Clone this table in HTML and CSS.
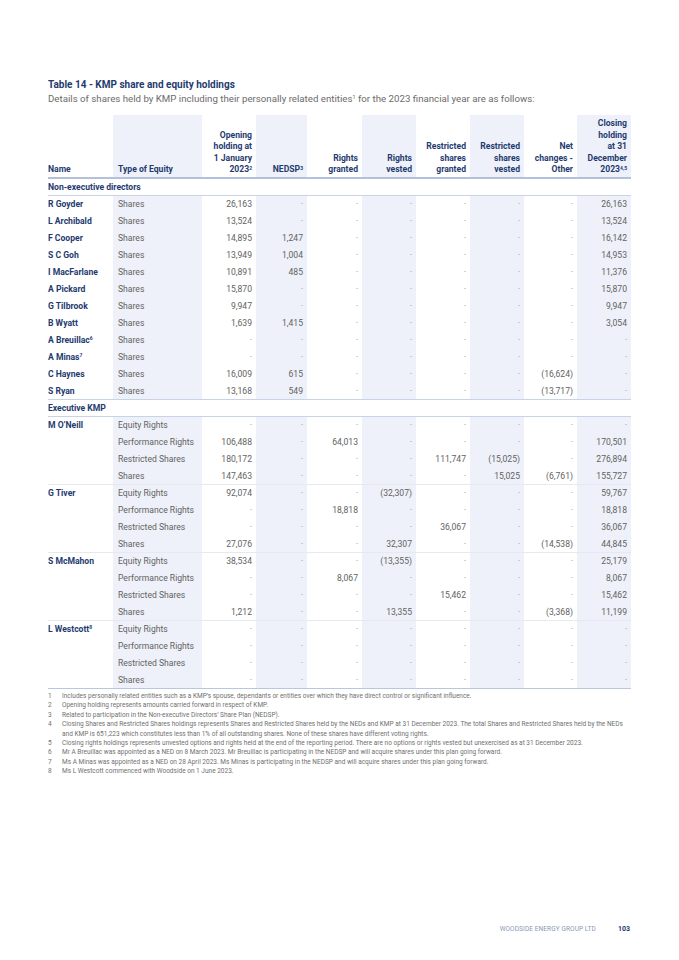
FILE: index.html
```html
<!DOCTYPE html>
<html lang="en">
<head>
<meta charset="utf-8">
<title>Table 14 - KMP share and equity holdings</title>
<link rel="stylesheet" href="styles.css">
</head>
<body>
<div class="page">
  <h1 class="title">Table 14 - KMP share and equity holdings</h1>
  <p class="intro">Details of shares held by KMP including their personally related entities<sup>1</sup> for the 2023 financial year are as follows:</p>

  <table class="kmp">
    <colgroup>
      <col class="c-name">
      <col class="c-type shade">
      <col class="c-num">
      <col class="c-num2 shade">
      <col class="c-num3">
      <col class="c-num shade">
      <col class="c-num">
      <col class="c-num shade">
      <col class="c-num4">
      <col class="c-num shade">
    </colgroup>
    <thead>
      <tr>
        <th class="l">Name</th>
        <th class="l">Type of Equity</th>
        <th>Opening<br>holding at<br>1 January<br>2023<sup>2</sup></th>
        <th>NEDSP<sup>3</sup></th>
        <th>Rights<br>granted</th>
        <th>Rights<br>vested</th>
        <th>Restricted<br>shares<br>granted</th>
        <th>Restricted<br>shares<br>vested</th>
        <th>Net<br>changes -<br>Other</th>
        <th>Closing<br>holding<br>at 31<br>December<br>2023<sup>4,5</sup></th>
      </tr>
    </thead>
    <tbody>
      <tr class="section first"><td colspan="10">Non-executive directors</td></tr>
      <tr><td class="nm">R Goyder</td><td class="ty">Shares</td><td>26,163</td><td class="d">-</td><td class="d">-</td><td class="d">-</td><td class="d">-</td><td class="d">-</td><td class="d">-</td><td>26,163</td></tr>
      <tr><td class="nm">L Archibald</td><td class="ty">Shares</td><td>13,524</td><td class="d">-</td><td class="d">-</td><td class="d">-</td><td class="d">-</td><td class="d">-</td><td class="d">-</td><td>13,524</td></tr>
      <tr><td class="nm">F Cooper</td><td class="ty">Shares</td><td>14,895</td><td>1,247</td><td class="d">-</td><td class="d">-</td><td class="d">-</td><td class="d">-</td><td class="d">-</td><td>16,142</td></tr>
      <tr><td class="nm">S C Goh</td><td class="ty">Shares</td><td>13,949</td><td>1,004</td><td class="d">-</td><td class="d">-</td><td class="d">-</td><td class="d">-</td><td class="d">-</td><td>14,953</td></tr>
      <tr><td class="nm">I MacFarlane</td><td class="ty">Shares</td><td>10,891</td><td>485</td><td class="d">-</td><td class="d">-</td><td class="d">-</td><td class="d">-</td><td class="d">-</td><td>11,376</td></tr>
      <tr><td class="nm">A Pickard</td><td class="ty">Shares</td><td>15,870</td><td class="d">-</td><td class="d">-</td><td class="d">-</td><td class="d">-</td><td class="d">-</td><td class="d">-</td><td>15,870</td></tr>
      <tr><td class="nm">G Tilbrook</td><td class="ty">Shares</td><td>9,947</td><td class="d">-</td><td class="d">-</td><td class="d">-</td><td class="d">-</td><td class="d">-</td><td class="d">-</td><td>9,947</td></tr>
      <tr><td class="nm">B Wyatt</td><td class="ty">Shares</td><td>1,639</td><td>1,415</td><td class="d">-</td><td class="d">-</td><td class="d">-</td><td class="d">-</td><td class="d">-</td><td>3,054</td></tr>
      <tr><td class="nm">A Breuillac<sup>6</sup></td><td class="ty">Shares</td><td class="d">-</td><td class="d">-</td><td class="d">-</td><td class="d">-</td><td class="d">-</td><td class="d">-</td><td class="d">-</td><td class="d">-</td></tr>
      <tr><td class="nm">A Minas<sup>7</sup></td><td class="ty">Shares</td><td class="d">-</td><td class="d">-</td><td class="d">-</td><td class="d">-</td><td class="d">-</td><td class="d">-</td><td class="d">-</td><td class="d">-</td></tr>
      <tr><td class="nm">C Haynes</td><td class="ty">Shares</td><td>16,009</td><td>615</td><td class="d">-</td><td class="d">-</td><td class="d">-</td><td class="d">-</td><td>(16,624)</td><td class="d">-</td></tr>
      <tr><td class="nm">S Ryan</td><td class="ty">Shares</td><td>13,168</td><td>549</td><td class="d">-</td><td class="d">-</td><td class="d">-</td><td class="d">-</td><td>(13,717)</td><td class="d">-</td></tr>

      <tr class="section second"><td colspan="10">Executive KMP</td></tr>
      <tr><td class="nm">M O’Neill</td><td class="ty">Equity Rights</td><td class="d">-</td><td class="d">-</td><td class="d">-</td><td class="d">-</td><td class="d">-</td><td class="d">-</td><td class="d">-</td><td class="d">-</td></tr>
      <tr><td></td><td class="ty">Performance Rights</td><td>106,488</td><td class="d">-</td><td>64,013</td><td class="d">-</td><td class="d">-</td><td class="d">-</td><td class="d">-</td><td>170,501</td></tr>
      <tr><td></td><td class="ty">Restricted Shares</td><td>180,172</td><td class="d">-</td><td class="d">-</td><td class="d">-</td><td>111,747</td><td>(15,025)</td><td class="d">-</td><td>276,894</td></tr>
      <tr class="grp-end"><td></td><td class="ty">Shares</td><td>147,463</td><td class="d">-</td><td class="d">-</td><td class="d">-</td><td class="d">-</td><td>15,025</td><td>(6,761)</td><td>155,727</td></tr>

      <tr><td class="nm">G Tiver</td><td class="ty">Equity Rights</td><td>92,074</td><td class="d">-</td><td class="d">-</td><td>(32,307)</td><td class="d">-</td><td class="d">-</td><td class="d">-</td><td>59,767</td></tr>
      <tr><td></td><td class="ty">Performance Rights</td><td class="d">-</td><td class="d">-</td><td>18,818</td><td class="d">-</td><td class="d">-</td><td class="d">-</td><td class="d">-</td><td>18,818</td></tr>
      <tr><td></td><td class="ty">Restricted Shares</td><td class="d">-</td><td class="d">-</td><td class="d">-</td><td class="d">-</td><td>36,067</td><td class="d">-</td><td class="d">-</td><td>36,067</td></tr>
      <tr class="grp-end"><td></td><td class="ty">Shares</td><td>27,076</td><td class="d">-</td><td class="d">-</td><td>32,307</td><td class="d">-</td><td class="d">-</td><td>(14,538)</td><td>44,845</td></tr>

      <tr><td class="nm">S McMahon</td><td class="ty">Equity Rights</td><td>38,534</td><td class="d">-</td><td class="d">-</td><td>(13,355)</td><td class="d">-</td><td class="d">-</td><td class="d">-</td><td>25,179</td></tr>
      <tr><td></td><td class="ty">Performance Rights</td><td class="d">-</td><td class="d">-</td><td>8,067</td><td class="d">-</td><td class="d">-</td><td class="d">-</td><td class="d">-</td><td>8,067</td></tr>
      <tr><td></td><td class="ty">Restricted Shares</td><td class="d">-</td><td class="d">-</td><td class="d">-</td><td class="d">-</td><td>15,462</td><td class="d">-</td><td class="d">-</td><td>15,462</td></tr>
      <tr class="grp-end"><td></td><td class="ty">Shares</td><td>1,212</td><td class="d">-</td><td class="d">-</td><td>13,355</td><td class="d">-</td><td class="d">-</td><td>(3,368)</td><td>11,199</td></tr>

      <tr><td class="nm">L Westcott<sup>8</sup></td><td class="ty">Equity Rights</td><td class="d">-</td><td class="d">-</td><td class="d">-</td><td class="d">-</td><td class="d">-</td><td class="d">-</td><td class="d">-</td><td class="d">-</td></tr>
      <tr><td></td><td class="ty">Performance Rights</td><td class="d">-</td><td class="d">-</td><td class="d">-</td><td class="d">-</td><td class="d">-</td><td class="d">-</td><td class="d">-</td><td class="d">-</td></tr>
      <tr><td></td><td class="ty">Restricted Shares</td><td class="d">-</td><td class="d">-</td><td class="d">-</td><td class="d">-</td><td class="d">-</td><td class="d">-</td><td class="d">-</td><td class="d">-</td></tr>
      <tr class="last"><td></td><td class="ty">Shares</td><td class="d">-</td><td class="d">-</td><td class="d">-</td><td class="d">-</td><td class="d">-</td><td class="d">-</td><td class="d">-</td><td class="d">-</td></tr>
    </tbody>
  </table>

  <ol class="notes">
    <li><span class="n">1</span><span>Includes personally related entities such as a KMP’s spouse, dependants or entities over which they have direct control or significant influence.</span></li>
    <li><span class="n">2</span><span>Opening holding represents amounts carried forward in respect of KMP.</span></li>
    <li><span class="n">3</span><span>Related to participation in the Non-executive Directors’ Share Plan (NEDSP).</span></li>
    <li><span class="n">4</span><span>Closing Shares and Restricted Shares holdings represents Shares and Restricted Shares held by the NEDs and KMP at 31 December 2023. The total Shares and Restricted Shares held by the NEDs and KMP is 651,223 which constitutes less than 1% of all outstanding shares. None of these shares have different voting rights.</span></li>
    <li><span class="n">5</span><span>Closing rights holdings represents unvested options and rights held at the end of the reporting period. There are no options or rights vested but unexercised as at 31 December 2023.</span></li>
    <li><span class="n">6</span><span>Mr A Breuillac was appointed as a NED on 8 March 2023. Mr Breuillac is participating in the NEDSP and will acquire shares under this plan going forward.</span></li>
    <li><span class="n">7</span><span>Ms A Minas was appointed as a NED on 28 April 2023. Ms Minas is participating in the NEDSP and will acquire shares under this plan going forward.</span></li>
    <li><span class="n">8</span><span>Ms L Westcott commenced with Woodside on 1 June 2023.</span></li>
  </ol>

  <footer class="footer">
    <span class="company">WOODSIDE ENERGY GROUP LTD</span>
    <span class="pageno">103</span>
  </footer>
</div>
</body>
</html>
```

FILE: styles.css
```css
* { box-sizing: border-box; }
html, body { margin: 0; padding: 0; background: #ffffff; }
body {
  font-family: Roboto, "Open Sans", "Liberation Sans", sans-serif;
  color: #626262;
}
.page {
  width: 679px;
  height: 960px;
  padding: 78px 48px 0 48px;
  position: relative;
}
.title {
  margin: 0;
  font-size: 10px;
  line-height: 13px;
  font-weight: 700;
  color: #1f3b6f;
}
.intro {
  margin: 1px 0 0 0;
  font-size: 9.7px;
  line-height: 13px;
  color: #6b6b6b;
}
.intro sup { font-size: 5.5px; vertical-align: top; line-height: 10px; }

.kmp {
  margin-top: 10px;
  width: 583px;
  border-collapse: collapse;
  table-layout: fixed;
  font-size: 8.6px;
}
.c-name { width: 65px; }
.c-type { width: 89px; }
.c-num { width: 54px; }
.c-num2 { width: 51px; }
.c-num3 { width: 55px; }
.c-num4 { width: 53px; }
.shade { background: #eef1f9; }

.kmp th {
  font-weight: 700;
  color: #1f3b6f;
  text-align: right;
  vertical-align: bottom;
  line-height: 11.6px;
  padding: 3px 4px 1px 4px;
  border-bottom: 2px solid #b3c1dc;
}
.kmp th.l { text-align: left; padding-left: 0; }
.kmp th:nth-child(2) { padding-left: 5px; }
.kmp th sup { font-size: 5px; vertical-align: top; line-height: 8px; }

.kmp td {
  height: 17px;
  padding: 0 4px;
  text-align: right;
  vertical-align: middle;
  white-space: nowrap;
  line-height: 16px;
}
.kmp td.nm {
  text-align: left;
  padding-left: 0;
  font-weight: 700;
  color: #1f3b6f;
}
.kmp td.nm sup { font-size: 5px; vertical-align: top; line-height: 12px; }
.kmp td.ty { text-align: left; padding-left: 5px; }
.kmp td.d { color: #a3a3a3; font-size: 7px; }

.kmp tr.section td {
  background: #ffffff;
  text-align: left;
  padding-left: 0;
  font-weight: 700;
  color: #1f3b6f;
  border-bottom: 1px solid #c8d3e8;
}
.kmp tr.section.second td { border-top: 1px solid #c8d3e8; }
.kmp tr.grp-end td { border-bottom: 1px solid #e6e9ef; }
.kmp tr.last td { border-bottom: 1px solid #b8c6df; }

.notes {
  list-style: none;
  margin: 3px 0 0 0;
  padding: 0;
  font-size: 6.5px;
  line-height: 9.4px;
  color: #707070;
}
.notes li { display: flex; }
.notes .n { flex: 0 0 14px; }

.footer {
  position: absolute;
  left: 0;
  right: 49px;
  top: 924px;
  display: flex;
  justify-content: flex-end;
  align-items: center;
  gap: 22px;
  font-size: 6.5px;
  line-height: 10px;
}
.company { color: #8a99b8; letter-spacing: 0.1px; }
.pageno { color: #1f3b6f; font-weight: 700; font-size: 7px; }
```
